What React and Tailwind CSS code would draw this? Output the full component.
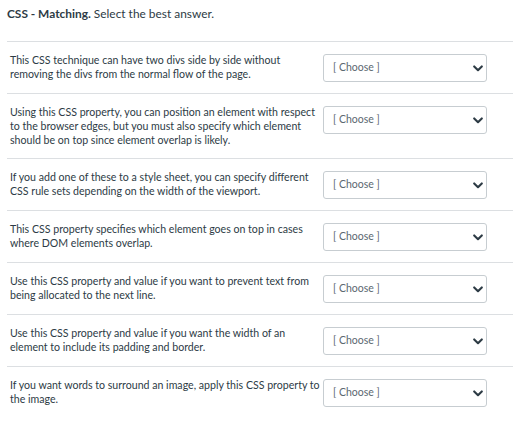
import React from "react";

const items = [
  "This CSS technique can have two divs side by side without removing the divs from the normal flow of the page.",
  "Using this CSS property, you can position an element with respect to the browser edges, but you must also specify which element should be on top since element overlap is likely.",
  "If you add one of these to a style sheet, you can specify different CSS rule sets depending on the width of the viewport.",
  "This CSS property specifies which element goes on top in cases where DOM elements overlap.",
  "Use this CSS property and value if you want to prevent text from being allocated to the next line.",
  "Use this CSS property and value if you want the width of an element to include its padding and border.",
  "If you want words to surround an image, apply this CSS property to the image.",
];

function Chevron() {
  return (
    <svg width="10" height="7" viewBox="0 0 10 7" className="block">
      <path d="M1.2 1.4 L5 5.2 L8.8 1.4" fill="none" stroke="#2d3b45" strokeWidth="2.1" strokeLinecap="round" strokeLinejoin="round" />
    </svg>
  );
}

export default function App() {
  return (
    <div className="w-[515px] h-[423px] bg-white overflow-hidden" style={{ fontFamily: "Lato, 'Open Sans', sans-serif" }}>
      <div className="pl-[7px] pt-[5px] h-[41px] text-[11.9px] leading-[18px] text-[#2d3b45]">
        <span className="font-bold">CSS - Matching.</span> Select the best answer.
      </div>
      <div className="ml-[7px] w-[506px]">
        {items.map((t, i) => (
          <div key={i} className="flex border-t border-[#dcdfe2] pt-[11px] pb-[11px] pl-[3px]">
            <div className="w-[311px] text-[10.6px] leading-[14px] text-[#2d3b45]">{t}</div>
            <div className="ml-[2px] mt-[1px] w-[164px] h-[28px] shrink-0 flex items-center justify-between border border-[#c7cdd1] rounded-[3px] pl-[9px] pr-[3px] bg-white">
              <span className="text-[10.5px] text-[#5b6770]">[ Choose ]</span>
              <Chevron />
            </div>
          </div>
        ))}
      </div>
    </div>
  );
}
